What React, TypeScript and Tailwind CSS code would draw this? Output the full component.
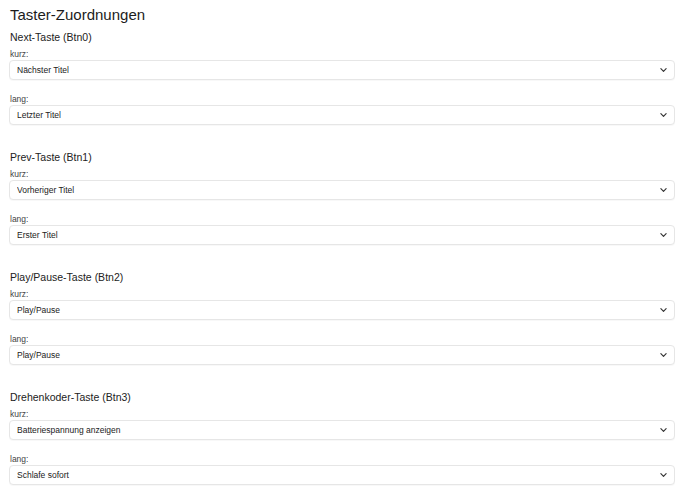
import React from "react";

type Group = {
  title: string;
  short: string;
  long: string;
};

const groups: Group[] = [
  { title: "Next-Taste (Btn0)", short: "Nächster Titel", long: "Letzter Titel" },
  { title: "Prev-Taste (Btn1)", short: "Vorheriger Titel", long: "Erster Titel" },
  { title: "Play/Pause-Taste (Btn2)", short: "Play/Pause", long: "Play/Pause" },
  { title: "Drehenkoder-Taste (Btn3)", short: "Batteriespannung anzeigen", long: "Schlafe sofort" },
];

function Chevron() {
  return (
    <svg
      viewBox="0 0 8 5"
      className="pointer-events-none absolute right-[8px] top-1/2 h-[5px] w-[7px] -translate-y-1/2"
      fill="none"
      stroke="#333"
      strokeWidth="1.3"
      strokeLinecap="round"
      strokeLinejoin="round"
    >
      <path d="M1 1l3 3 3-3" />
    </svg>
  );
}

function SelectBox({ value }: { value: string }) {
  return (
    <div className="relative">
      <select
        defaultValue={value}
        className="block h-[20px] w-full appearance-none rounded-[4px] border border-[#e6e6e6] bg-white pl-[7px] pr-6 text-[8.5px] leading-[18px] text-[#222] shadow-[0_1px_1px_rgba(0,0,0,0.03)] outline-none"
      >
        <option>{value}</option>
      </select>
      <Chevron />
    </div>
  );
}

export default function App() {
  return (
    <div
      className="min-h-[490px] w-[690px] bg-white pl-[9px] pr-[15px] text-[#222]"
      style={{ fontFamily: '"Liberation Sans", Arial, sans-serif' }}
    >
      <h1 className="pt-[5px] pl-px text-[15px] leading-[20px] font-normal text-[#1c1c1c]">
        Taster-Zuordnungen
      </h1>
      <div className="mt-[4px] flex flex-col gap-[24px]">
        {groups.map((g) => (
          <section key={g.title}>
            <h2 className="pl-px text-[10.5px] leading-[16px] text-[#222]">{g.title}</h2>
            <label className="mt-[3px] block pl-px text-[8.5px] leading-[12px] text-[#444]">kurz:</label>
            <SelectBox value={g.short} />
            <label className="mt-[13px] block pl-px text-[8.5px] leading-[12px] text-[#444]">lang:</label>
            <SelectBox value={g.long} />
          </section>
        ))}
      </div>
    </div>
  );
}
